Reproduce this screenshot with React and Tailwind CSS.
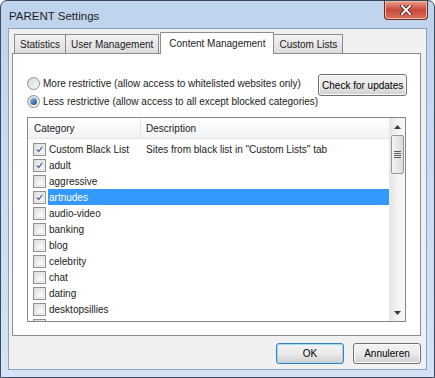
const rows = [
  { name: "Custom Black List", desc: 'Sites from black list in "Custom Lists" tab', checked: true },
  { name: "adult", checked: true },
  { name: "aggressive" },
  { name: "artnudes", checked: true, selected: true },
  { name: "audio-video" },
  { name: "banking" },
  { name: "blog" },
  { name: "celebrity" },
  { name: "chat" },
  { name: "dating" },
  { name: "desktopsillies" },
  { name: "drugs" },
];

function CheckBox({ checked }) {
  return (
    <span className="w-[13px] h-[13px] shrink-0 border border-[#8e8f8f] bg-gradient-to-br from-[#dcdcdc] to-[#fbfbfb] flex items-center justify-center p-[1px]">
      <span className="w-full h-full border border-[#e3e3e3] bg-gradient-to-br from-[#e6e6e6] to-white flex items-center justify-center">
        {checked && (
          <svg width="9" height="9" viewBox="0 0 9 9">
            <path d="M1 4.5 L3.5 7.2 L8 1" fill="none" stroke="#4a5f97" strokeWidth="1.6" />
          </svg>
        )}
      </span>
    </span>
  );
}

function Radio({ on }) {
  return (
    <span className="w-[13px] h-[13px] shrink-0 rounded-full border border-[#8e8f8f] bg-gradient-to-br from-[#d8d8d8] to-[#fafafa] flex items-center justify-center">
      {on && <span className="w-[7px] h-[7px] rounded-full bg-gradient-to-br from-[#9cc8e8] to-[#18488a]" />}
    </span>
  );
}

function Btn({ children, focus, className }) {
  return (
    <div
      className={
        "h-[21px] shrink-0 rounded-[3px] border flex items-center justify-center whitespace-nowrap bg-gradient-to-b from-[#f2f2f2] via-[#ebebeb] to-[#cfcfcf] text-black " +
        (focus ? "border-[#3c7fb1] shadow-[inset_0_0_0_1px_#9fdcf5] " : "border-[#707070] shadow-[inset_0_0_0_1px_#fbfbfb] ") +
        (className || "")
      }
    >
      {children}
    </div>
  );
}

export default function App() {
  return (
    <div
      className="w-[435px] h-[378px] flex flex-col rounded-t-[7px] border border-[#3b4a5c] bg-gradient-to-b from-[#bed3ec] via-[#c9dcf1] to-[#d4e3f5] px-[7px] pb-[7px] text-[10px] text-[#1a1a1a] whitespace-nowrap"
      style={{ fontFamily: '"Liberation Sans", Arial, sans-serif' }}
    >
      <div className="h-[27px] flex items-start justify-between">
        <div className="pt-[7px] pl-[1px] text-[11.5px] text-[#1e1e1e]">PARENT Settings</div>
        <div className="w-[44px] h-[19px] -mr-[1px] rounded-b-[4px] border border-t-0 border-[#6b2a22] bg-gradient-to-b from-[#e7a08f] via-[#c9463a] to-[#d6735d] flex items-center justify-center shadow-[inset_0_0_0_1px_#f2b9a8]">
          <svg width="12" height="10" viewBox="0 0 12 10">
            <path d="M2 1 L10 9 M10 1 L2 9" stroke="#3c1510" strokeWidth="3.4" strokeLinecap="square" />
            <path d="M2 1 L10 9 M10 1 L2 9" stroke="#ffffff" strokeWidth="2" strokeLinecap="square" />
          </svg>
        </div>
      </div>

      <div className="flex-1 flex flex-col border border-[#8ca2bd] bg-[#f0f0f0] pl-[3px] pr-[5px] pt-[2px]">
        <div className="flex items-end h-[22px] pl-[2px] relative z-10">
          <div className="h-[19px] px-[5px] border border-b-0 border-[#898c95] bg-gradient-to-b from-[#f2f2f2] to-[#dddddd] flex items-center">Statistics</div>
          <div className="h-[19px] px-[5px] border border-b-0 border-l-0 border-[#898c95] bg-gradient-to-b from-[#f2f2f2] to-[#dddddd] flex items-center">User Management</div>
          <div className="h-[22px] -mb-[1px] ml-[1px] px-[8px] border border-b-0 border-[#898c95] bg-white flex items-start pt-[3px]">Content Management</div>
          <div className="h-[19px] px-[5px] border border-b-0 border-l-0 border-[#898c95] bg-gradient-to-b from-[#f2f2f2] to-[#dddddd] flex items-center">Custom Lists</div>
        </div>

        <div className="h-[283px] border border-[#898c95] bg-white flex flex-col px-[14px]">
          <div className="flex justify-between mt-[20px]">
            <div className="flex flex-col">
              <div className="flex items-center gap-[3px] h-[13px] mt-[3px]">
                <Radio />
                <span className="leading-none">More restrictive (allow access to whitelisted websites only)</span>
              </div>
              <div className="flex items-center gap-[3px] h-[13px] mt-[5px]">
                <Radio on />
                <span className="leading-none">Less restrictive (allow access to all except blocked categories)</span>
              </div>
            </div>
            <Btn className="w-[89px] h-[22px]">Check for updates</Btn>
          </div>

          <div className="mt-[9px] h-[205px] border border-[#828790] flex">
            <div className="flex-1 flex flex-col overflow-hidden">
              <div className="h-[21px] shrink-0 flex border-b border-[#e5e5e5] bg-gradient-to-b from-white to-[#f1f2f4]">
                <div className="w-[113px] pl-[6px] flex items-center border-r border-[#e2e3e6]">Category</div>
                <div className="pl-[5px] flex items-center">Description</div>
              </div>
              <div className="flex flex-col pt-[2px]">
                {rows.map((r) => (
                  <div key={r.name} className="h-[16px] shrink-0 flex items-center">
                    <div className="pl-[5px] flex items-center">
                      <CheckBox checked={r.checked} />
                    </div>
                    <div
                      className={
                        "h-full flex items-center flex-1 ml-[2px] pl-[1px] " +
                        (r.selected ? "bg-[#3399ff] text-white" : "")
                      }
                    >
                      <span className="w-[92px] shrink-0">{r.name}</span>
                      {r.desc && <span className="pl-[5px]">{r.desc}</span>}
                    </div>
                  </div>
                ))}
              </div>
            </div>
            <div className="w-[16px] shrink-0 flex flex-col bg-gradient-to-r from-[#e5e5e5] via-[#f4f4f4] to-[#f7f7f7] border-l border-[#e8e8e8]">
              <div className="h-[17px] flex items-center justify-center">
                <svg width="7" height="4" viewBox="0 0 7 4"><path d="M0 4 L3.5 0 L7 4 Z" fill="#3a3a3a" /></svg>
              </div>
              <div className="mx-[1px] h-[39px] rounded-[2px] border border-[#979797] bg-gradient-to-r from-[#f4f4f4] to-[#dadada] flex flex-col items-center justify-center gap-[1px]">
                <span className="w-[7px] h-[1px] bg-[#5f5f5f]" />
                <span className="w-[7px] h-[1px] bg-[#5f5f5f]" />
                <span className="w-[7px] h-[1px] bg-[#5f5f5f]" />
                <span className="w-[7px] h-[1px] bg-[#5f5f5f]" />
              </div>
              <div className="flex-1" />
              <div className="h-[17px] flex items-center justify-center">
                <svg width="7" height="4" viewBox="0 0 7 4"><path d="M0 0 L3.5 4 L7 0 Z" fill="#3a3a3a" /></svg>
              </div>
            </div>
          </div>
        </div>

        <div className="flex justify-end gap-[9px] mt-[7px]">
          <Btn focus className="w-[68px]">OK</Btn>
          <Btn className="w-[68px]">Annuleren</Btn>
        </div>
      </div>
    </div>
  );
}
